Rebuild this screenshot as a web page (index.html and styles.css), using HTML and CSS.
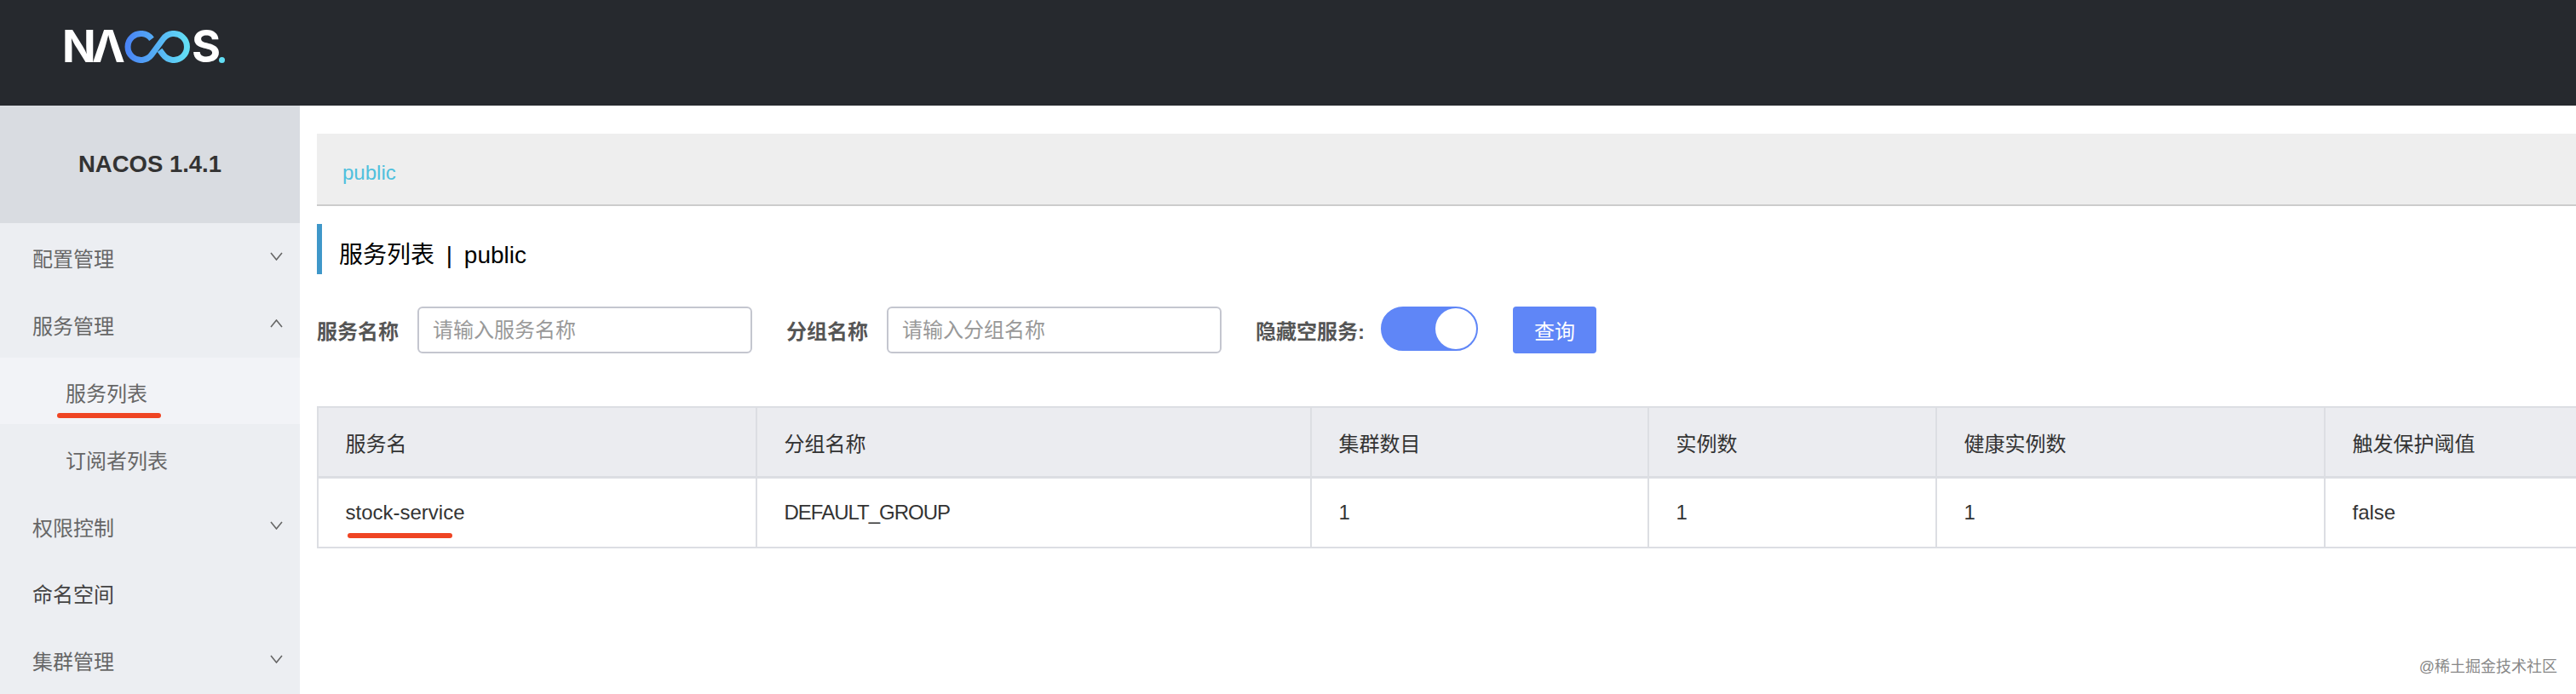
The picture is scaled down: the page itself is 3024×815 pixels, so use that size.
FILE: index.html

```html
<!DOCTYPE html>
<html lang="en">
<head>
  <meta charset="UTF-8">
  <title>Nacos</title>
  <link rel="stylesheet" href="styles.css">
</head>
<body>

  <header class="topbar">
    <div class="logo">
      <span class="logo-n">N</span><span class="logo-a">Λ</span>
      <svg class="logo-loop" width="81" height="38" viewBox="0 0 81 38">
        <defs>
          <linearGradient id="loop" x1="0" y1="0" x2="1" y2="0">
            <stop offset="0" stop-color="#4a85f5"/>
            <stop offset="1" stop-color="#62def5"/>
          </linearGradient>
        </defs>
        <path d="M34 9.8A15.5 15.5 0 1 0 34 28.2L47.5 9.8A15.5 15.5 0 1 1 47.5 28.2L43.5 22.8" fill="none" stroke="url(#loop)" stroke-width="7"/>
      </svg>
      <span class="logo-s">S</span><span class="logo-dot"></span>
    </div>
  </header>

  <div class="layout">
    <aside class="sidebar">
      <div class="version">NACOS 1.4.1</div>
      <ul class="menu">
        <li class="menu-item"><span class="menu-text">配置管理</span>
          <svg class="chevron" width="15" height="10" viewBox="0 0 15 10"><path d="M1 1l6.5 8L14 1" fill="none" stroke="#666" stroke-width="1.6"/></svg>
        </li>
        <li class="menu-item"><span class="menu-text">服务管理</span>
          <svg class="chevron" width="15" height="10" viewBox="0 0 15 10"><path d="M1 9l6.5-8L14 9" fill="none" stroke="#666" stroke-width="1.6"/></svg>
        </li>
        <li class="menu-item sub active"><span class="menu-text">服务列表</span><span class="mark mark-menu"></span></li>
        <li class="menu-item sub"><span class="menu-text">订阅者列表</span></li>
        <li class="menu-item"><span class="menu-text">权限控制</span>
          <svg class="chevron" width="15" height="10" viewBox="0 0 15 10"><path d="M1 1l6.5 8L14 1" fill="none" stroke="#666" stroke-width="1.6"/></svg>
        </li>
        <li class="menu-item dark"><span class="menu-text">命名空间</span></li>
        <li class="menu-item"><span class="menu-text">集群管理</span>
          <svg class="chevron" width="15" height="10" viewBox="0 0 15 10"><path d="M1 1l6.5 8L14 1" fill="none" stroke="#666" stroke-width="1.6"/></svg>
        </li>
      </ul>
    </aside>

    <main class="content">
      <div class="namespace"><a class="namespace-link">public</a></div>
      <h1 class="page-title">服务列表 <span class="sep">|</span> public</h1>

      <form class="filters">
        <label class="filter-label">服务名称</label>
        <input class="filter-input" type="text" placeholder="请输入服务名称">
        <label class="filter-label second">分组名称</label>
        <input class="filter-input" type="text" placeholder="请输入分组名称">
        <label class="filter-label third">隐藏空服务:</label>
        <span class="toggle"><span class="toggle-knob"></span></span>
        <button class="query" type="button">查询</button>
      </form>

      <table class="services">
        <colgroup>
          <col class="col-name"><col class="col-group"><col class="col-cluster">
          <col class="col-count"><col class="col-healthy"><col class="col-threshold">
        </colgroup>
        <thead>
          <tr><th>服务名</th><th>分组名称</th><th>集群数目</th><th>实例数</th><th>健康实例数</th><th>触发保护阈值</th></tr>
        </thead>
        <tbody>
          <tr>
            <td class="service-cell">stock-service<span class="mark mark-cell"></span></td>
            <td class="group-cell">DEFAULT_GROUP</td><td>1</td><td>1</td><td>1</td><td>false</td>
          </tr>
        </tbody>
      </table>
    </main>
  </div>

  <div class="watermark">@稀土掘金技术社区</div>

</body>
</html>
```

FILE: styles.css

```css
html, body { margin: 0; height: 815px; overflow: hidden; background: #fff; }
body { font-family: "Liberation Sans", "Noto Sans CJK SC", sans-serif; font-size: 24px; color: #333; position: relative; }

.topbar { height: 124px; background: #26292e; display: flex; align-items: flex-start; padding: 36px 0 0 77px; box-sizing: border-box; }
.logo { display: flex; height: 38px; align-items: center; font-family: Inter, sans-serif; font-weight: 700; font-size: 52px; line-height: 38px; color: #fff; }
.logo-n { width: 33px; margin-left: -4px; }
.logo-a { width: 38px; margin-left: 2px; }
.logo-loop { flex: none; margin-left: -2px; }
.logo-s { width: 31px; margin-left: 0; }
.logo-dot { width: 7px; height: 7px; border-radius: 50%; background: #62def5; align-self: flex-end; margin-left: 1px; }

.layout { display: flex; height: 691px; }

.sidebar { width: 352px; flex: none; background: #eceef2; }
.version { height: 138px; background: #d9dce1; display: flex; align-items: center; justify-content: center; font-size: 27.5px; font-weight: bold; color: #333; }
.menu { list-style: none; margin: 0; padding: 0; }
.menu-item { position: relative; height: 78.8px; padding-left: 38px; display: flex; align-items: center; justify-content: space-between; padding-right: 20px; color: #666; }
.menu-text { padding-top: 3px; }
.menu-item.sub { padding-left: 77px; }
.menu-item.active { background: #f2f3f7; }
.menu-item.dark { color: #444; }
.chevron { flex: none; }

.mark { position: absolute; height: 6px; border-radius: 3px; background: #ef4423; }
.mark-menu { left: 67px; width: 122px; top: 65px; }
.mark-cell { left: 34px; width: 123px; top: 64px; }

.content { flex: 1; min-width: 0; padding: 33px 0 0 20px; }
.namespace { background: #eee; border-bottom: 2px solid #ccc; padding: 32px 0 0 30px; height: 51px; line-height: 28px; }
.namespace-link { color: #4fc0dd; }

.page-title { margin: 21px 0 0; height: 59px; border-left: 6px solid #3f97c9; padding-left: 20px; box-sizing: border-box; font-size: 28px; font-weight: normal; line-height: 73px; color: #000; }
.sep { margin: 0 6px; }

.filters { display: flex; align-items: center; margin-top: 38px; height: 55px; }
.filter-label { font-weight: bold; color: #555; margin-right: 22px; flex: none; }
.filter-label.second { margin-left: 40px; }
.filter-label.third { margin-left: 40px; margin-right: 19px; }
.filter-input { width: 393px; height: 55px; box-sizing: border-box; border: 2px solid #c4c6cf; border-radius: 6px; padding: 0 16px; font: inherit; outline: none; }
.filter-input::placeholder { color: #999; }
.toggle { width: 114px; height: 52px; box-sizing: border-box; border: 2px solid #5f86f7; border-radius: 26px; background: #5f86f7; display: flex; justify-content: flex-end; align-self: flex-start; flex: none; }
.toggle-knob { width: 48px; height: 48px; border-radius: 50%; background: #fff; }
.query { margin-left: 41px; width: 98px; height: 55px; border: none; border-radius: 4px; background: #5f86f7; color: #fff; font: inherit; padding: 0; }

.services { margin-top: 62px; width: 2652px; table-layout: fixed; border-collapse: collapse; border: 2px solid #dcdee3; border-right: none; }
.col-name { width: 515px; }
.col-group { width: 651px; }
.col-cluster { width: 396px; }
.col-count { width: 338px; }
.col-healthy { width: 456px; }
.col-threshold { width: 296px; }
.services th, .services td { border: 1px solid #dcdee3; border-right-width: 2px; padding: 0 31.5px; text-align: left; font-weight: normal; color: #333; }
.services th:last-child, .services td:last-child { border-right: none; }
.services th { height: 80px; background: #ebecf0; border-bottom-width: 3px; }
.services td { height: 80px; }
.group-cell { letter-spacing: -1px; }
.service-cell { position: relative; }

.watermark { position: absolute; right: 22px; bottom: 21px; font-size: 18px; line-height: 22px; color: #888; }
```
